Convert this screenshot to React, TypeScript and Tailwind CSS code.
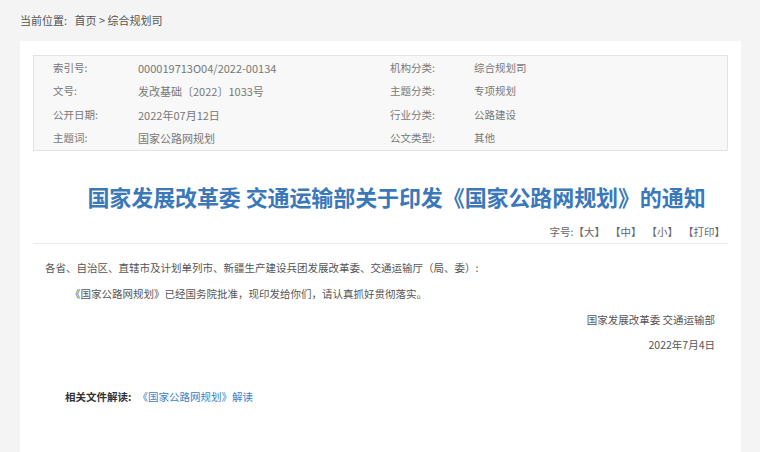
const FONT = "font-['Microsoft_YaHei','Noto_Sans_CJK_SC',sans-serif]";

const META: [string, string, string, string][] = [
  ["索引号:", "000019713O04/2022-00134", "机构分类:", "综合规划司"],
  ["文号:", "发改基础〔2022〕1033号", "主题分类:", "专项规划"],
  ["公开日期:", "2022年07月12日", "行业分类:", "公路建设"],
  ["主题词:", "国家公路网规划", "公文类型:", "其他"],
];

export default function App() {
  return (
    <div className={`${FONT} w-[760px] h-[452px] overflow-hidden bg-[#f4f4f4] text-[10.5px] text-[#555]`}>
      {/* 面包屑 */}
      <div className="h-[41px] pl-[20px] pt-[13px] leading-[14px] text-[11px] text-[#555]">
        当前位置:&nbsp;&nbsp; 首页 &gt; 综合规划司
      </div>

      <div className="ml-[20px] w-[721px] h-[411px] bg-white pt-[14px] px-[13px]">
        {/* 信息表 */}
        <div className="border border-[#e3e3e3] bg-[#f8f8f8] h-[96px] flex flex-col justify-center">
          {META.map(([l1, v1, l2, v2]) => (
            <div key={l1} className="flex h-[24px] items-center text-[#777]">
              <span className="w-[104px] pl-[19px]">{l1}</span>
              <span className="w-[252px] text-[11px]">{v1}</span>
              <span className="w-[84px]">{l2}</span>
              <span>{v2}</span>
            </div>
          ))}
        </div>

        {/* 标题 */}
        <h1 className="mt-[30px] pl-[32px] text-center text-[22px] leading-[30px] font-bold text-[#3a78b9] tracking-[-0.1px]">
          国家发展改革委 交通运输部关于印发《国家公路网规划》的通知
        </h1>

        <div className="mt-[14px] flex justify-end gap-[5px] pr-[3px] leading-[14px] text-[#666]">
          <span>字号:【大】</span>
          <span>【中】</span>
          <span>【小】</span>
          <span>【打印】</span>
        </div>
        <div className="mt-[4px] border-t border-[#eaeaea]" />

        {/* 正文 */}
        <div className="px-[12px] pt-[17px] leading-[14px] text-[#555]">
          <p>各省、自治区、直辖市及计划单列市、新疆生产建设兵团发展改革委、交通运输厅（局、委）:</p>
          <p className="mt-[12px] pl-[25px]">
            《国家公路网规划》已经国务院批准，现印发给你们，请认真抓好贯彻落实。
          </p>
          <p className="mt-[12px] text-right pr-[1px]">国家发展改革委 交通运输部</p>
          <p className="mt-[11px] text-right pr-[1px]">2022年7月4日</p>
        </div>

        <div className="mt-[38px] pl-[32px] leading-[14px]">
          <span className="font-bold text-[#333]">相关文件解读:</span>
          <span className="ml-[6px] text-[#3a7fc8]">《国家公路网规划》解读</span>
        </div>
      </div>
    </div>
  );
}
